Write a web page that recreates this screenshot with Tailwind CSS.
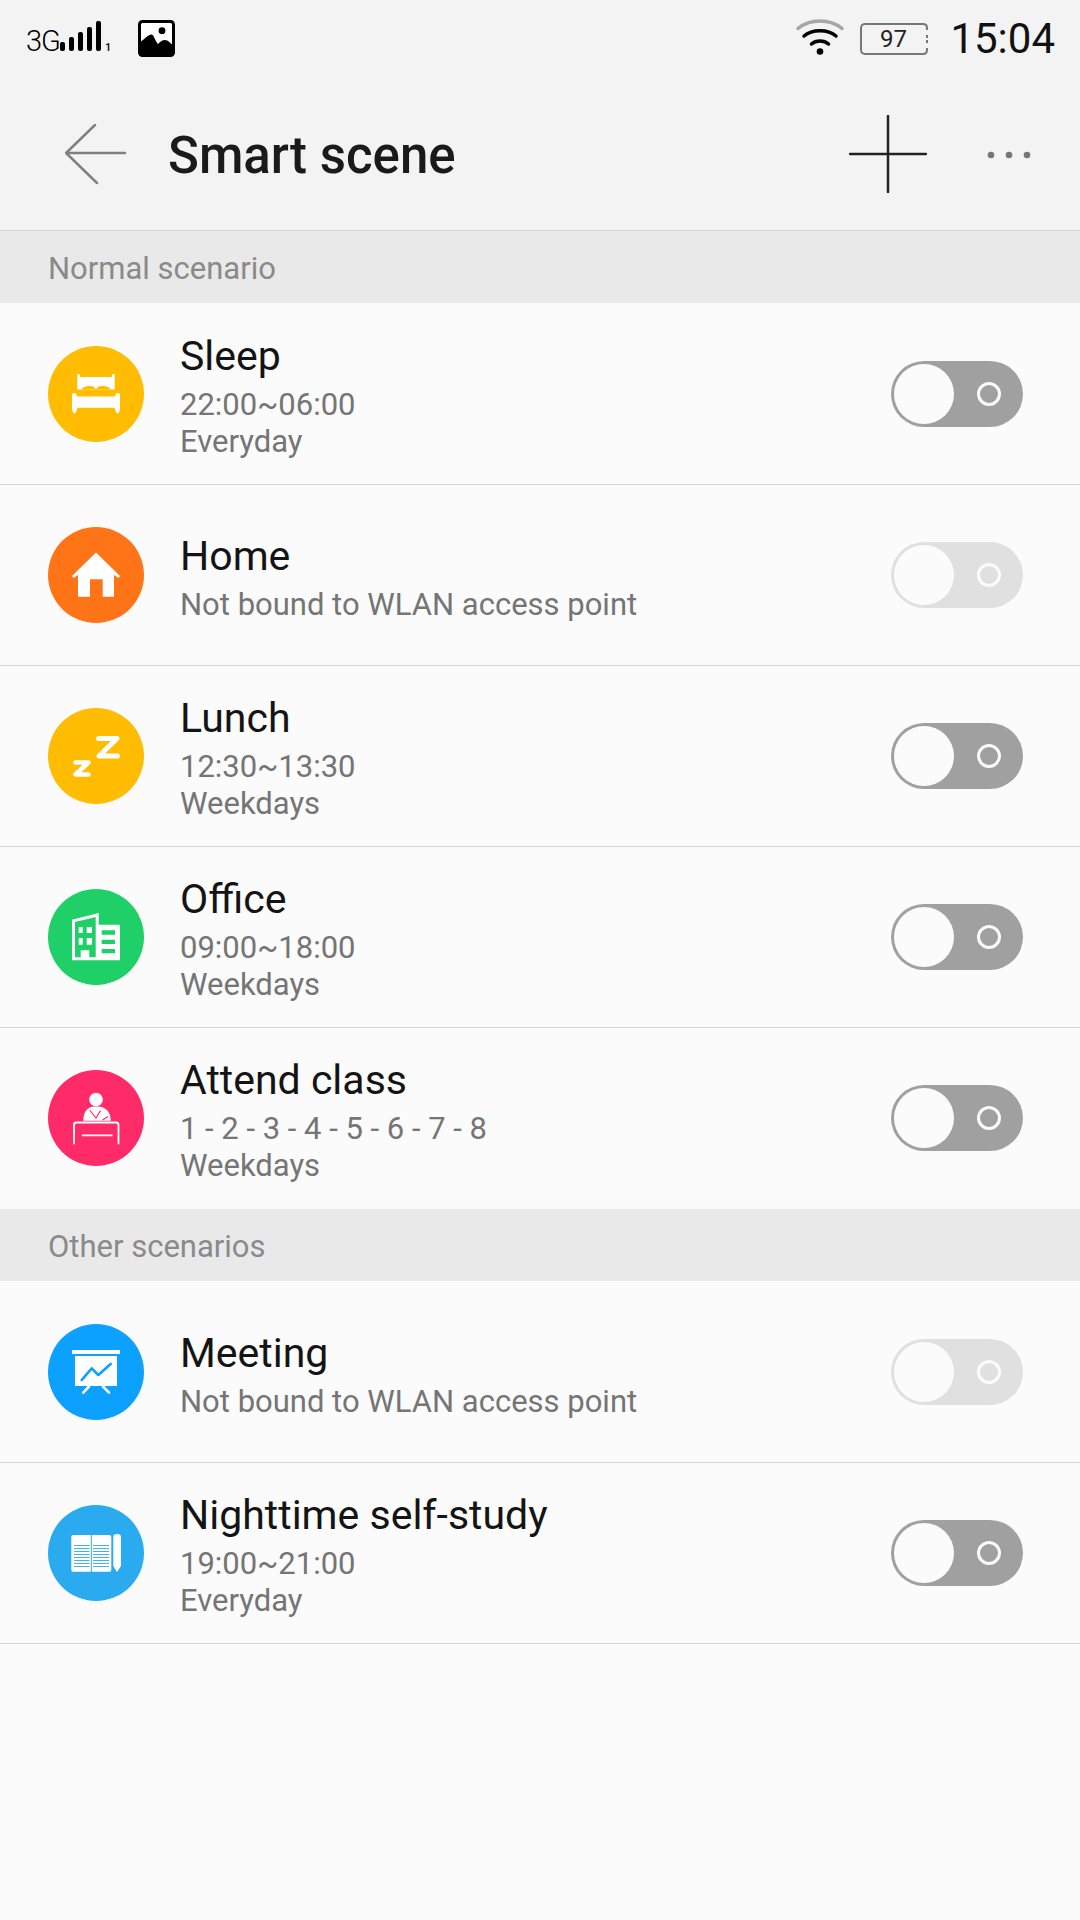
<!DOCTYPE html>
<html lang="en">
<head>
<meta charset="UTF-8" />
<title>Smart scene</title>
<script src="https://cdn.jsdelivr.net/npm/@tailwindcss/browser@4"></script>
</head>
<body class="m-0 w-[1080px] h-[1920px] overflow-hidden bg-[#fbfbfb] font-['Roboto',sans-serif]">
  <!-- header -->
  <header class="h-[231px] bg-[#f3f3f3] border-b border-[#d4d4d4]">
    <!-- status bar -->
    <div class="h-[77px] flex items-center pl-[26px] pr-[25px]">
      <span class="w-[34px] text-[29px] font-light text-black tracking-[-1px] leading-none mt-[5px]">3G</span>
      <svg class="w-[50px] h-[34px] -mt-[3px]" viewBox="0 0 50 34" fill="#000">
        <rect x="0" y="22" width="5" height="9" rx="2"/>
        <rect x="9" y="17" width="5" height="14" rx="2"/>
        <rect x="18" y="12" width="5" height="19" rx="2"/>
        <rect x="27" y="7" width="5" height="24" rx="2"/>
        <rect x="36" y="1" width="5" height="30" rx="2"/>
      </svg>
      <span class="w-[6px] text-[11px] font-medium leading-none text-black -ml-[5px] mt-[17px]">1</span>
      <svg class="w-[37px] h-[37px] ml-[27px] -mt-[1px]" viewBox="0 0 37 37">
        <rect x="1.5" y="1.5" width="34" height="34" rx="3" fill="#fff" stroke="#000" stroke-width="3"/>
        <path d="M2 22 C6 20 10 14.5 13.3 14.5 C16 14.5 17 21 20 24 C22 22 24 20 27 20 C30 20 32 23 35 25 V35 H2 Z" fill="#000"/>
        <circle cx="24" cy="10.7" r="3.4" fill="#000"/>
      </svg>
      <svg class="w-[48px] h-[40px] ml-auto" viewBox="0 0 48 40" fill="none" stroke-linecap="round">
        <path d="M2 9.5 C14 -0.5 34 -0.5 46 9.5" stroke="#a6a6a6" stroke-width="3.5"/>
        <path d="M8 17 C16 10 32 10 40 17" stroke="#000" stroke-width="3.5"/>
        <path d="M15.5 25 C20 21 28 21 32.5 25" stroke="#000" stroke-width="3.5"/>
        <circle cx="24" cy="32.5" r="3.3" fill="#000"/>
      </svg>
      <div class="ml-[16px] flex items-center">
        <div class="w-[62px] h-[32px] border-2 border-r-0 border-[#777] rounded-l-[5px] flex items-center justify-center pl-[2px] text-[24px] leading-none text-[#222]">97</div>
        <svg class="w-[6px] h-[32px]" viewBox="0 0 6 32" fill="none" stroke="#777" stroke-width="2">
          <path d="M0 1 H1 Q5 1 5 5 V7 M5 12 V15 M5 17 V20 M5 25 V27 Q5 31 1 31 H0"/>
        </svg>
      </div>
      <span class="ml-[22px] text-[42px] leading-none text-[#111]">15:04</span>
    </div>
    <!-- toolbar -->
    <div class="h-[153px] flex items-center pl-[65px] pr-[49px]">
      <svg class="w-[62px] h-[62px] mt-[2px]" viewBox="0 0 62 62" fill="none" stroke="#808080" stroke-width="2.5" stroke-linecap="round">
        <path d="M1 29 H60 M30 1 L1 29 L32 59"/>
      </svg>
      <h1 class="ml-[41px] mt-[3px] text-[51px] leading-none font-medium text-[#1a1a1a]">Smart scene</h1>
      <svg class="w-[78px] h-[78px] ml-auto" viewBox="0 0 78 78" fill="none" stroke="#222" stroke-width="2.5" stroke-linecap="round">
        <path d="M1 39 H77 M39 1 V77"/>
      </svg>
      <svg class="w-[44px] h-[8px] ml-[60px] mt-[2px]" viewBox="0 0 44 8" fill="#777">
        <circle cx="4" cy="4" r="3.3"/><circle cx="22" cy="4" r="3.3"/><circle cx="40" cy="4" r="3.3"/>
      </svg>
    </div>
  </header>

  <div class="h-[72px] flex items-center pl-[48px] pt-[5px] bg-[#e9e9e9] text-[31px] text-[#8a8a8a]">Normal scenario</div>

  <!-- Sleep -->
  <div class="h-[182px] flex items-center pl-[48px] pr-[57px] border-b border-[#d4d4d4]">
    <svg class="w-[96px] h-[96px] shrink-0" viewBox="0 0 96 96">
      <circle cx="48" cy="48" r="48" fill="#ffbc00"/>
      <path d="M29.3 28.3 h2.4 l0.8 2.7 h31 l0.8 -2.7 h2.4 V43.5 H29.3 Z" fill="#fff"/>
      <path d="M33.5 43.5 C35 40 43 39 46.5 41.5 L48 43 L49.5 41.5 C53 39 61 40 62.5 43.5 Z" fill="#ffbc00"/>
      <path d="M24 48.5 Q24 47.3 25.2 47.3 h2.8 l1 3.2 h38 l1 -3.2 h2.8 Q72 47.3 72 48.5 v15 l-1.5 3.8 h-2 l-2 -5.5 H29.5 l-2 5.5 h-2 L24 63.5 Z" fill="#fff"/>
    </svg>
    <div class="ml-[36px] flex flex-col">
      <div class="text-[41px] leading-[57px] text-[#141414]">Sleep</div>
      <div class="mt-[1px] text-[31px] leading-[37px] text-[#757575]">22:00~06:00</div>
      <div class="text-[31px] leading-[37px] text-[#757575]">Everyday</div>
    </div>
    <div class="ml-auto w-[132px] h-[66px] rounded-full bg-[#a0a0a0] flex items-center pl-[3px]">
      <div class="w-[60px] h-[60px] rounded-full bg-[#fbfbfb]"></div>
      <div class="ml-[23px] w-[24px] h-[24px] rounded-full border-[3px] border-[#fbfbfb]"></div>
    </div>
  </div>

  <!-- Home -->
  <div class="h-[181px] flex items-center pl-[48px] pr-[57px] border-b border-[#d4d4d4]">
    <svg class="w-[96px] h-[96px] shrink-0" viewBox="0 0 96 96">
      <circle cx="48" cy="48" r="48" fill="#ff7416"/>
      <path d="M48 25.5 L72 49 L70.5 51 L66 48 V69.7 H54.7 V52.3 H42 V69.7 H30 V48 L25.5 51 L24 49 Z" fill="#fff"/>
    </svg>
    <div class="ml-[36px] mt-[1px] flex flex-col">
      <div class="text-[41px] leading-[57px] text-[#141414]">Home</div>
      <div class="mt-[1px] text-[31px] leading-[37px] text-[#757575]">Not bound to WLAN access point</div>
    </div>
    <div class="ml-auto w-[132px] h-[66px] rounded-full bg-[#e0e0e0] flex items-center pl-[3px]">
      <div class="w-[60px] h-[60px] rounded-full bg-[#fbfbfb]"></div>
      <div class="ml-[23px] w-[24px] h-[24px] rounded-full border-[3px] border-[#fbfbfb]"></div>
    </div>
  </div>

  <!-- Lunch -->
  <div class="h-[181px] flex items-center pl-[48px] pr-[57px] border-b border-[#d4d4d4]">
    <svg class="w-[96px] h-[96px] shrink-0" viewBox="0 0 96 96">
      <circle cx="48" cy="48" r="48" fill="#ffbc00"/>
      <path d="M50.5 30.5 H69 L51 48 H69.5" fill="none" stroke="#fff" stroke-width="5" stroke-linecap="round" stroke-linejoin="round"/>
      <path d="M27.5 54.5 H40.5 L27.5 66.5 H40.5" fill="none" stroke="#fff" stroke-width="4.5" stroke-linecap="round" stroke-linejoin="round"/>
    </svg>
    <div class="ml-[36px] flex flex-col">
      <div class="text-[41px] leading-[57px] text-[#141414]">Lunch</div>
      <div class="mt-[1px] text-[31px] leading-[37px] text-[#757575]">12:30~13:30</div>
      <div class="text-[31px] leading-[37px] text-[#757575]">Weekdays</div>
    </div>
    <div class="ml-auto w-[132px] h-[66px] rounded-full bg-[#a0a0a0] flex items-center pl-[3px]">
      <div class="w-[60px] h-[60px] rounded-full bg-[#fbfbfb]"></div>
      <div class="ml-[23px] w-[24px] h-[24px] rounded-full border-[3px] border-[#fbfbfb]"></div>
    </div>
  </div>

  <!-- Office -->
  <div class="h-[181px] flex items-center pl-[48px] pr-[57px] border-b border-[#d4d4d4]">
    <svg class="w-[96px] h-[96px] shrink-0" viewBox="0 0 96 96">
      <circle cx="48" cy="48" r="48" fill="#1fd069"/>
      <path d="M24 30.7 L50.7 24 V35.7 H72 V71.3 H24 Z" fill="#fff"/>
      <path d="M27 33 L47.7 28 V68.3 H41.3 V61.3 H32.7 V68.3 H27 Z" fill="#1fd069"/>
      <path d="M30.7 38 h4 v6 h-4 Z M38.7 38 h5.3 v6 h-5.3 Z M30.7 49 h4 v6.7 h-4 Z M38.7 49 h5.3 v6.7 h-5.3 Z" fill="#fff"/>
      <path d="M53.7 41.3 H67 v4.4 H53.7 Z M53.7 50.7 H67 V55 H53.7 Z M53.7 60 H67 v4.3 H53.7 Z" fill="#1fd069"/>
    </svg>
    <div class="ml-[36px] flex flex-col">
      <div class="text-[41px] leading-[57px] text-[#141414]">Office</div>
      <div class="mt-[1px] text-[31px] leading-[37px] text-[#757575]">09:00~18:00</div>
      <div class="text-[31px] leading-[37px] text-[#757575]">Weekdays</div>
    </div>
    <div class="ml-auto w-[132px] h-[66px] rounded-full bg-[#a0a0a0] flex items-center pl-[3px]">
      <div class="w-[60px] h-[60px] rounded-full bg-[#fbfbfb]"></div>
      <div class="ml-[23px] w-[24px] h-[24px] rounded-full border-[3px] border-[#fbfbfb]"></div>
    </div>
  </div>

  <!-- Attend class -->
  <div class="h-[181px] flex items-center pl-[48px] pr-[57px] pb-[2px]">
    <svg class="w-[96px] h-[96px] shrink-0" viewBox="0 0 96 96">
      <circle cx="48" cy="48" r="48" fill="#ff2a68"/>
      <circle cx="48" cy="29.5" r="6.8" fill="#fff"/>
      <path d="M35.3 50.7 C35.3 41 40 37 46 36.5 H50 C57 37 62.7 41 62.7 50.7 Z" fill="#fff"/>
      <path d="M42 40.5 L48 48 L52.5 40.5 M54.5 50 L60 46.5" fill="none" stroke="#ff2a68" stroke-width="1.2"/>
      <path d="M26 74.3 V55 Q26 52.5 28.5 52.5 H68 Q70.5 52.5 70.5 55 V74.3 M34 65.3 H64.5" fill="none" stroke="#fff" stroke-width="1.8"/>
    </svg>
    <div class="ml-[36px] mt-[1px] flex flex-col">
      <div class="text-[41px] leading-[57px] text-[#141414]">Attend class</div>
      <div class="mt-[1px] text-[31px] leading-[37px] text-[#757575]">1 - 2 - 3 - 4 - 5 - 6 - 7 - 8</div>
      <div class="text-[31px] leading-[37px] text-[#757575]">Weekdays</div>
    </div>
    <div class="ml-auto w-[132px] h-[66px] rounded-full bg-[#a0a0a0] flex items-center pl-[3px]">
      <div class="w-[60px] h-[60px] rounded-full bg-[#fbfbfb]"></div>
      <div class="ml-[23px] w-[24px] h-[24px] rounded-full border-[3px] border-[#fbfbfb]"></div>
    </div>
  </div>

  <div class="h-[72px] flex items-center pl-[48px] pt-[5px] bg-[#e9e9e9] text-[31px] text-[#8a8a8a]">Other scenarios</div>

  <!-- Meeting -->
  <div class="h-[182px] flex items-center pl-[48px] pr-[57px] border-b border-[#d4d4d4]">
    <svg class="w-[96px] h-[96px] shrink-0" viewBox="0 0 96 96">
      <circle cx="48" cy="48" r="48" fill="#0ca0ff"/>
      <path d="M24 26 H72 V30 H24 Z M27 32 H69 V62 H27 Z" fill="#fff"/>
      <path d="M33.7 56 L43.7 44.3 L50.3 51 L62.7 40" fill="none" stroke="#0ca0ff" stroke-width="2.6" stroke-linecap="round" stroke-linejoin="round"/>
      <path d="M41 62.5 L35.3 68.7 M55 62.5 L61 68.7" fill="none" stroke="#fff" stroke-width="2.6" stroke-linecap="round"/>
    </svg>
    <div class="ml-[36px] mt-[1px] flex flex-col">
      <div class="text-[41px] leading-[57px] text-[#141414]">Meeting</div>
      <div class="mt-[1px] text-[31px] leading-[37px] text-[#757575]">Not bound to WLAN access point</div>
    </div>
    <div class="ml-auto w-[132px] h-[66px] rounded-full bg-[#e0e0e0] flex items-center pl-[3px]">
      <div class="w-[60px] h-[60px] rounded-full bg-[#fbfbfb]"></div>
      <div class="ml-[23px] w-[24px] h-[24px] rounded-full border-[3px] border-[#fbfbfb]"></div>
    </div>
  </div>

  <!-- Nighttime self-study -->
  <div class="h-[181px] flex items-center pl-[48px] pr-[57px] border-b border-[#d4d4d4]">
    <svg class="w-[96px] h-[96px] shrink-0" viewBox="0 0 96 96">
      <circle cx="48" cy="48" r="48" fill="#2aabef"/>
      <path d="M25 30 H42.8 V66.7 H25 Q23.3 66.7 23.3 65 V31.7 Q23.3 30 25 30 Z M43.8 30 H61.5 Q63.3 30 63.3 31.7 V65 Q63.3 66.7 61.5 66.7 H43.8 Z" fill="#fff"/>
      <path d="M26 40.5 H41.5 M26 43.5 H41.5 M26 46.5 H41.5 M26 49.5 H41.5 M26 52.5 H41.5 M26 55.5 H41.5 M26 58.5 H41.5 M26 61.5 H41.5 M45 40.5 H61 M45 43.5 H61 M45 46.5 H61 M45 49.5 H61 M45 52.5 H61 M45 55.5 H61 M45 58.5 H61 M45 61.5 H61" fill="none" stroke="#2aabef" stroke-width="0.9"/>
      <path d="M65.3 32 Q65.3 29 69 29 Q73 29 73 32 V61 L69 67 L65.3 61 Z" fill="#fff"/>
    </svg>
    <div class="ml-[36px] flex flex-col">
      <div class="text-[41px] leading-[57px] text-[#141414]">Nighttime self-study</div>
      <div class="mt-[1px] text-[31px] leading-[37px] text-[#757575]">19:00~21:00</div>
      <div class="text-[31px] leading-[37px] text-[#757575]">Everyday</div>
    </div>
    <div class="ml-auto w-[132px] h-[66px] rounded-full bg-[#a0a0a0] flex items-center pl-[3px]">
      <div class="w-[60px] h-[60px] rounded-full bg-[#fbfbfb]"></div>
      <div class="ml-[23px] w-[24px] h-[24px] rounded-full border-[3px] border-[#fbfbfb]"></div>
    </div>
  </div>
</body>
</html>
